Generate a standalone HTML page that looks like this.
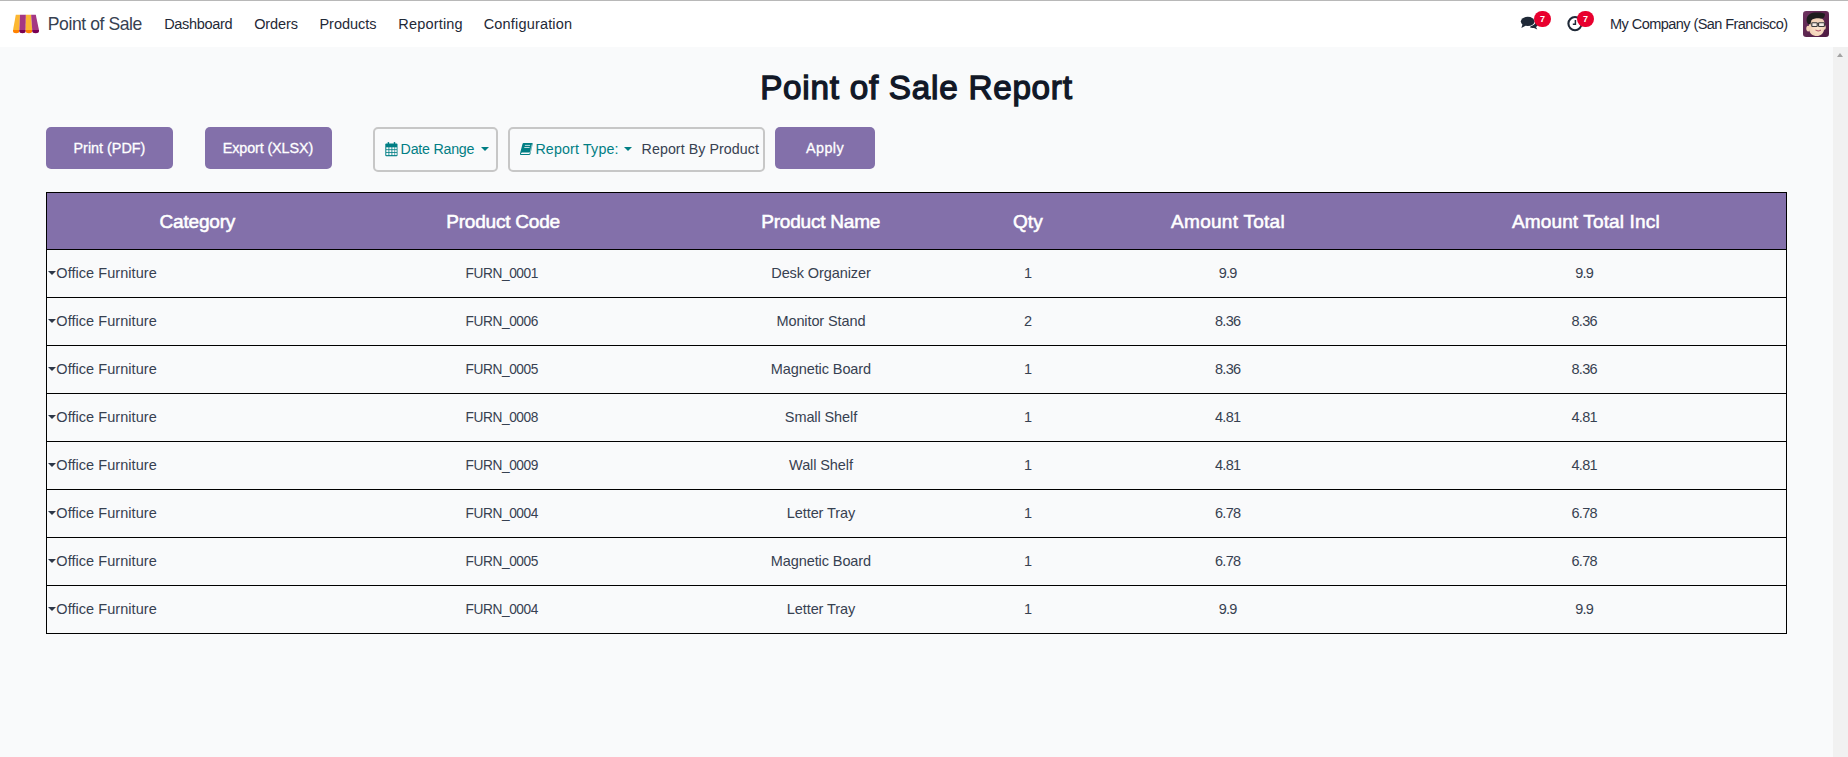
<!DOCTYPE html>
<html><head><meta charset="utf-8">
<style>
*{box-sizing:border-box;margin:0;padding:0}
html,body{width:1848px;height:757px;overflow:hidden}
body{font-family:"Liberation Sans",sans-serif;background:#f9fafb;position:relative;color:#374151}
.topline{position:absolute;left:0;top:0;width:1848px;height:1px;background:#b8b8b8}
.nav{position:absolute;left:0;top:1px;width:1848px;height:46px;background:#fff}
.t{position:absolute;white-space:nowrap;line-height:1}
.bl{display:inline-block;width:0;height:0;vertical-align:baseline}
.scroll{position:absolute;left:1833px;top:47px;width:15px;height:710px;background:#f1f1f1}
.uparr{position:absolute;left:1836.5px;top:52.8px;width:0;height:0;border-left:3.8px solid transparent;border-right:3.8px solid transparent;border-bottom:4.4px solid #a3a3a3}
.btn{position:absolute;top:127px;height:42px;background:#8370aa;border-radius:5px}
.box{position:absolute;top:127px;height:45px;border:2px solid #c7c7c7;border-radius:5px}
.tbl{position:absolute;left:46px;top:192px;width:1741px;height:442px;border:1px solid #000}
.thead{position:absolute;left:47px;top:193px;width:1739px;height:56px;background:#8370aa}
.hl{position:absolute;left:47px;width:1739px;height:1px;background:#000}
.dt{font-size:14.5px;color:#374151}
.dc{width:200px;text-align:center}
.caret{position:absolute;left:48px;width:0;height:0;border-left:4px solid transparent;border-right:4px solid transparent;border-top:4.6px solid #2d3748}
.tcaret{position:absolute;width:0;height:0;border-left:4px solid transparent;border-right:4px solid transparent;border-top:4.4px solid #017e84}
.badge{position:absolute;top:11px;width:17px;height:16px;border-radius:8px;background:#e8002e;color:#fff;font-size:9px;font-weight:bold;text-align:center;line-height:16px}
</style></head><body>
<div class="topline"></div>
<div class="nav"></div>
<svg style="position:absolute;left:12px;top:13px" width="28" height="22" viewBox="12 13 28 22">
  <path d="M15.8 14.8 H20 L19.3 30.2 H13 Z" fill="#fcb732"/>
  <path d="M20 14.8 H25.9 L25.7 30.2 H19.3 Z" fill="#a43783"/>
  <path d="M25.9 14.8 H31.1 L32.2 30.2 H25.7 Z" fill="#fcb732"/>
  <path d="M31.1 14.8 H35.8 L39 30.2 H32.2 Z" fill="#a43783"/>
  <path d="M13 30 H19.3 V31 A3.15 2.2 0 0 1 13 31 Z" fill="#ff8200"/>
  <path d="M19.3 30 H25.7 V31 A3.2 2.2 0 0 1 19.3 31 Z" fill="#7a0052"/>
  <path d="M25.7 30 H32.2 V31 A3.25 2.2 0 0 1 25.7 31 Z" fill="#ff8200"/>
  <path d="M32.2 30 H39 V31 A3.4 2.2 0 0 1 32.2 31 Z" fill="#7a0052"/>
</svg>
<!-- chat icon -->
<svg style="position:absolute;left:1520px;top:15px" width="20" height="18" viewBox="0 0 20 18">
  <path d="M10.6 11.2 C13.5 10.8 15.6 9 15.6 6.6 C15.6 5.9 15.4 5.3 15.1 4.8 C17 5.5 18.3 6.9 18.3 8.6 C18.3 10 17.4 11.2 16 12 L17.3 14.5 L14 12.9 C13.5 13 13 13.1 12.5 13.1 C11.6 13.1 10.8 12.9 10.1 12.6 Z" fill="#1f2937"/>
  <ellipse cx="7.7" cy="6.4" rx="6.9" ry="4.6" fill="#1f2937"/>
  <path d="M2.6 9 L1.4 13 L6 10.6 Z" fill="#1f2937"/>
</svg>
<div class="badge" style="left:1534px">7</div>
<!-- clock icon -->
<svg style="position:absolute;left:1566px;top:15px" width="18" height="18" viewBox="0 0 18 18">
  <circle cx="9" cy="8.6" r="6.6" fill="none" stroke="#1f2937" stroke-width="2.1"/>
  <path d="M9.4 4.9 V9.2 H6.8" fill="none" stroke="#1f2937" stroke-width="1.5"/>
</svg>
<div class="badge" style="left:1577px">7</div>
<!-- avatar -->
<svg style="position:absolute;left:1803px;top:11px" width="26" height="26" viewBox="0 0 26 26">
  <defs><linearGradient id="ag" x1="0" y1="0" x2="1" y2="1"><stop offset="0" stop-color="#6e3461"/><stop offset="1" stop-color="#4d1a40"/></linearGradient>
  <radialGradient id="sk" cx="0.55" cy="0.55" r="0.6"><stop offset="0" stop-color="#fde6cf"/><stop offset="1" stop-color="#efcdb2"/></radialGradient></defs>
  <rect x="0" y="0" width="26" height="26" rx="3.2" fill="url(#ag)"/>
  <ellipse cx="5.2" cy="17.6" rx="1.9" ry="2.8" fill="#f3d2b8"/>
  <ellipse cx="21.2" cy="16.4" rx="1.6" ry="2.4" fill="#f3d2b8"/>
  <path d="M6 10 C6 7.5 9 6.2 13.5 6.4 C18 6.6 21.2 8 21.4 11.5 L21.2 18 C20.8 22.6 17.5 25 13.8 25 C9.6 25 6.4 22.4 6 18 Z" fill="url(#sk)"/>
  <path d="M3.6 9.5 C3.4 5 6.8 2 11.5 1.6 C15 1.2 19 1.4 21.6 2.6 C22.4 3.4 21.8 5.6 20.6 7 C19.8 7.6 18.5 7.4 17 7.4 C13 7.2 10 7.8 8.4 9.2 L7.4 13.4 L5.2 13 C4.2 12 3.7 10.8 3.6 9.5 Z" fill="#1e1e1e"/>
  <rect x="8.8" y="11.7" width="5.4" height="3.8" rx="0.6" fill="#f4ece6" stroke="#3a3a3a" stroke-width="1.1"/>
  <rect x="15.6" y="11.7" width="5.8" height="3.8" rx="0.6" fill="#f4ece6" stroke="#3a3a3a" stroke-width="1.1"/>
  <path d="M14.2 12.6 H15.6" stroke="#3a3a3a" stroke-width="0.9"/>
  <path d="M12.6 19.2 Q15.2 21.4 18 19.2 Q15.3 20 12.6 19.2 Z" fill="#fff" stroke="#b05060" stroke-width="0.7"/>
</svg>
<div class="scroll"></div><div class="uparr"></div>
<div class="btn" style="left:46px;width:127px"></div>
<div class="btn" style="left:205px;width:127px"></div>
<div class="box" style="left:373px;width:125px"></div>
<div class="box" style="left:508px;width:257px"></div>
<div class="btn" style="left:775px;width:100px"></div>
<!-- calendar icon -->
<svg style="position:absolute;left:384px;top:141px" width="15" height="16" viewBox="0 0 15 16">
  <rect x="1.3" y="2.6" width="12.2" height="12.6" rx="1" fill="#017e84"/>
  <g fill="#f9fafb">
   <rect x="2.3" y="6.3" width="2.2" height="2"/><rect x="5.3" y="6.3" width="2.2" height="2"/><rect x="8.3" y="6.3" width="2.2" height="2"/><rect x="11.1" y="6.3" width="1.6" height="2"/>
   <rect x="2.3" y="9.1" width="2.2" height="2"/><rect x="5.3" y="9.1" width="2.2" height="2"/><rect x="8.3" y="9.1" width="2.2" height="2"/><rect x="11.1" y="9.1" width="1.6" height="2"/>
   <rect x="2.3" y="11.9" width="2.2" height="2.2"/><rect x="5.3" y="11.9" width="2.2" height="2.2"/><rect x="8.3" y="11.9" width="2.2" height="2.2"/><rect x="11.1" y="11.9" width="1.6" height="2.2"/>
  </g>
  <rect x="3.7" y="1" width="1.4" height="3.4" rx="0.6" fill="#017e84"/><rect x="9.8" y="1" width="1.4" height="3.4" rx="0.6" fill="#017e84"/>
</svg>
<div class="tcaret" style="left:481px;top:147px"></div>
<!-- book icon -->
<svg style="position:absolute;left:519px;top:142px" width="15" height="14" viewBox="0 0 15 14">
  <path d="M4.6 1 H13 Q13.9 1 13.7 1.9 L11.6 11.2 Q11.4 12.9 10.2 12.9 H2 Q0.7 12.9 1 11.4 L3.5 2 Q3.8 1 4.6 1 Z" fill="#017e84"/>
  <path d="M2.2 11.1 H10.6 L10.4 12 H2 Z" fill="#f9fafb"/>
  <path d="M2.6 10.6 L11.2 10.6 L13.1 2.4" fill="none" stroke="#f9fafb" stroke-width="0.55"/>
  <path d="M5.9 3.4 H11.1 M5.3 5.5 H10.6" stroke="#f9fafb" stroke-width="0.75"/>
</svg>
<div class="tcaret" style="left:624px;top:147px"></div>
<div class="tbl"></div>
<div class="thead"></div>
<div class="hl" style="top:249px"></div>
<div class="hl" style="top:297px"></div>
<div class="hl" style="top:345px"></div>
<div class="hl" style="top:393px"></div>
<div class="hl" style="top:441px"></div>
<div class="hl" style="top:489px"></div>
<div class="hl" style="top:537px"></div>
<div class="hl" style="top:585px"></div>
<div class="caret" style="top:271px"></div>
<div class="t dt" style="left:56.30px;top:265.57px;letter-spacing:0.05px">Office Furniture</div>
<div class="t dt dc" style="left:402.00px;top:265.57px;letter-spacing:-0.45px;text-indent:-0.45px;transform:scaleX(0.945)">FURN_0001</div>
<div class="t dt dc" style="left:721.00px;top:265.57px;letter-spacing:-0.1px;text-indent:-0.1px">Desk Organizer</div>
<div class="t dt dc" style="left:928.00px;top:265.57px;letter-spacing:-0.7px;text-indent:-0.7px">1</div>
<div class="t dt dc" style="left:1128.00px;top:265.57px;letter-spacing:-0.7px;text-indent:-0.7px">9.9</div>
<div class="t dt dc" style="left:1484.50px;top:265.57px;letter-spacing:-0.7px;text-indent:-0.7px">9.9</div>
<div class="caret" style="top:319px"></div>
<div class="t dt" style="left:56.30px;top:313.57px;letter-spacing:0.05px">Office Furniture</div>
<div class="t dt dc" style="left:402.00px;top:313.57px;letter-spacing:-0.45px;text-indent:-0.45px;transform:scaleX(0.945)">FURN_0006</div>
<div class="t dt dc" style="left:721.00px;top:313.57px;letter-spacing:-0.1px;text-indent:-0.1px">Monitor Stand</div>
<div class="t dt dc" style="left:928.00px;top:313.57px;letter-spacing:-0.7px;text-indent:-0.7px">2</div>
<div class="t dt dc" style="left:1128.00px;top:313.57px;letter-spacing:-0.7px;text-indent:-0.7px">8.36</div>
<div class="t dt dc" style="left:1484.50px;top:313.57px;letter-spacing:-0.7px;text-indent:-0.7px">8.36</div>
<div class="caret" style="top:367px"></div>
<div class="t dt" style="left:56.30px;top:361.57px;letter-spacing:0.05px">Office Furniture</div>
<div class="t dt dc" style="left:402.00px;top:361.57px;letter-spacing:-0.45px;text-indent:-0.45px;transform:scaleX(0.945)">FURN_0005</div>
<div class="t dt dc" style="left:721.00px;top:361.57px;letter-spacing:-0.1px;text-indent:-0.1px">Magnetic Board</div>
<div class="t dt dc" style="left:928.00px;top:361.57px;letter-spacing:-0.7px;text-indent:-0.7px">1</div>
<div class="t dt dc" style="left:1128.00px;top:361.57px;letter-spacing:-0.7px;text-indent:-0.7px">8.36</div>
<div class="t dt dc" style="left:1484.50px;top:361.57px;letter-spacing:-0.7px;text-indent:-0.7px">8.36</div>
<div class="caret" style="top:415px"></div>
<div class="t dt" style="left:56.30px;top:409.57px;letter-spacing:0.05px">Office Furniture</div>
<div class="t dt dc" style="left:402.00px;top:409.57px;letter-spacing:-0.45px;text-indent:-0.45px;transform:scaleX(0.945)">FURN_0008</div>
<div class="t dt dc" style="left:721.00px;top:409.57px;letter-spacing:-0.1px;text-indent:-0.1px">Small Shelf</div>
<div class="t dt dc" style="left:928.00px;top:409.57px;letter-spacing:-0.7px;text-indent:-0.7px">1</div>
<div class="t dt dc" style="left:1128.00px;top:409.57px;letter-spacing:-0.7px;text-indent:-0.7px">4.81</div>
<div class="t dt dc" style="left:1484.50px;top:409.57px;letter-spacing:-0.7px;text-indent:-0.7px">4.81</div>
<div class="caret" style="top:463px"></div>
<div class="t dt" style="left:56.30px;top:457.57px;letter-spacing:0.05px">Office Furniture</div>
<div class="t dt dc" style="left:402.00px;top:457.57px;letter-spacing:-0.45px;text-indent:-0.45px;transform:scaleX(0.945)">FURN_0009</div>
<div class="t dt dc" style="left:721.00px;top:457.57px;letter-spacing:-0.1px;text-indent:-0.1px">Wall Shelf</div>
<div class="t dt dc" style="left:928.00px;top:457.57px;letter-spacing:-0.7px;text-indent:-0.7px">1</div>
<div class="t dt dc" style="left:1128.00px;top:457.57px;letter-spacing:-0.7px;text-indent:-0.7px">4.81</div>
<div class="t dt dc" style="left:1484.50px;top:457.57px;letter-spacing:-0.7px;text-indent:-0.7px">4.81</div>
<div class="caret" style="top:511px"></div>
<div class="t dt" style="left:56.30px;top:505.57px;letter-spacing:0.05px">Office Furniture</div>
<div class="t dt dc" style="left:402.00px;top:505.57px;letter-spacing:-0.45px;text-indent:-0.45px;transform:scaleX(0.945)">FURN_0004</div>
<div class="t dt dc" style="left:721.00px;top:505.57px;letter-spacing:-0.1px;text-indent:-0.1px">Letter Tray</div>
<div class="t dt dc" style="left:928.00px;top:505.57px;letter-spacing:-0.7px;text-indent:-0.7px">1</div>
<div class="t dt dc" style="left:1128.00px;top:505.57px;letter-spacing:-0.7px;text-indent:-0.7px">6.78</div>
<div class="t dt dc" style="left:1484.50px;top:505.57px;letter-spacing:-0.7px;text-indent:-0.7px">6.78</div>
<div class="caret" style="top:559px"></div>
<div class="t dt" style="left:56.30px;top:553.57px;letter-spacing:0.05px">Office Furniture</div>
<div class="t dt dc" style="left:402.00px;top:553.57px;letter-spacing:-0.45px;text-indent:-0.45px;transform:scaleX(0.945)">FURN_0005</div>
<div class="t dt dc" style="left:721.00px;top:553.57px;letter-spacing:-0.1px;text-indent:-0.1px">Magnetic Board</div>
<div class="t dt dc" style="left:928.00px;top:553.57px;letter-spacing:-0.7px;text-indent:-0.7px">1</div>
<div class="t dt dc" style="left:1128.00px;top:553.57px;letter-spacing:-0.7px;text-indent:-0.7px">6.78</div>
<div class="t dt dc" style="left:1484.50px;top:553.57px;letter-spacing:-0.7px;text-indent:-0.7px">6.78</div>
<div class="caret" style="top:607px"></div>
<div class="t dt" style="left:56.30px;top:601.57px;letter-spacing:0.05px">Office Furniture</div>
<div class="t dt dc" style="left:402.00px;top:601.57px;letter-spacing:-0.45px;text-indent:-0.45px;transform:scaleX(0.945)">FURN_0004</div>
<div class="t dt dc" style="left:721.00px;top:601.57px;letter-spacing:-0.1px;text-indent:-0.1px">Letter Tray</div>
<div class="t dt dc" style="left:928.00px;top:601.57px;letter-spacing:-0.7px;text-indent:-0.7px">1</div>
<div class="t dt dc" style="left:1128.00px;top:601.57px;letter-spacing:-0.7px;text-indent:-0.7px">9.9</div>
<div class="t dt dc" style="left:1484.50px;top:601.57px;letter-spacing:-0.7px;text-indent:-0.7px">9.9</div>
<div class="t" id="brand" style="left:47.80px;top:15.91px;font-size:17.59px;letter-spacing:-0.433px;font-weight:400;color:#374151;">Point of Sale<i class="bl"></i></div>
<div class="t" id="n1" style="left:164.20px;top:16.91px;font-size:14.53px;letter-spacing:-0.325px;font-weight:400;color:#1f2937;">Dashboard<i class="bl"></i></div>
<div class="t" id="n2" style="left:254.20px;top:16.91px;font-size:14.53px;letter-spacing:-0.120px;font-weight:400;color:#1f2937;">Orders<i class="bl"></i></div>
<div class="t" id="n3" style="left:319.50px;top:16.91px;font-size:14.53px;letter-spacing:-0.057px;font-weight:400;color:#1f2937;">Products<i class="bl"></i></div>
<div class="t" id="n4" style="left:398.30px;top:16.91px;font-size:14.53px;letter-spacing:0.175px;font-weight:400;color:#1f2937;">Reporting<i class="bl"></i></div>
<div class="t" id="n5" style="left:483.70px;top:16.91px;font-size:14.53px;letter-spacing:0.167px;font-weight:400;color:#1f2937;">Configuration<i class="bl"></i></div>
<div class="t" id="comp" style="left:1610.00px;top:16.91px;font-size:14.53px;letter-spacing:-0.560px;font-weight:400;color:#1f2937;">My Company (San Francisco)<i class="bl"></i></div>
<div class="t" id="title" style="left:760.20px;top:70.91px;font-size:33.28px;letter-spacing:0.737px;font-weight:400;color:#111827;-webkit-text-stroke:1.3px #111827">Point of Sale Report<i class="bl"></i></div>
<div class="t" id="b1" style="left:73.50px;top:140.90px;font-size:14.39px;letter-spacing:0.000px;font-weight:400;color:#ffffff;-webkit-text-stroke:0.3px #ffffff">Print (PDF)<i class="bl"></i></div>
<div class="t" id="b2" style="left:222.80px;top:140.90px;font-size:14.39px;letter-spacing:-0.125px;font-weight:400;color:#ffffff;-webkit-text-stroke:0.3px #ffffff">Export (XLSX)<i class="bl"></i></div>
<div class="t" id="b3" style="left:806.00px;top:140.81px;font-size:14.39px;letter-spacing:0.425px;font-weight:400;color:#ffffff;-webkit-text-stroke:0.3px #ffffff">Apply<i class="bl"></i></div>
<div class="t" id="dr" style="left:400.60px;top:141.90px;font-size:14.24px;letter-spacing:-0.239px;font-weight:400;color:#017e84;">Date Range<i class="bl"></i></div>
<div class="t" id="rt" style="left:535.40px;top:141.90px;font-size:14.24px;letter-spacing:0.173px;font-weight:400;color:#017e84;">Report Type:<i class="bl"></i></div>
<div class="t" id="rp" style="left:641.60px;top:141.90px;font-size:14.24px;letter-spacing:0.062px;font-weight:400;color:#374151;">Report By Product<i class="bl"></i></div>
<div class="t" id="h1" style="left:159.50px;top:212.00px;font-size:19.04px;letter-spacing:-0.200px;font-weight:400;color:#ffffff;-webkit-text-stroke:0.55px #ffffff">Category<i class="bl"></i></div>
<div class="t" id="h2" style="left:446.30px;top:212.00px;font-size:19.04px;letter-spacing:-0.236px;font-weight:400;color:#ffffff;-webkit-text-stroke:0.55px #ffffff">Product Code<i class="bl"></i></div>
<div class="t" id="h3" style="left:761.20px;top:212.00px;font-size:19.04px;letter-spacing:-0.218px;font-weight:400;color:#ffffff;-webkit-text-stroke:0.55px #ffffff">Product Name<i class="bl"></i></div>
<div class="t" id="h4" style="left:1012.90px;top:212.00px;font-size:19.04px;letter-spacing:0.150px;font-weight:400;color:#ffffff;-webkit-text-stroke:0.55px #ffffff">Qty<i class="bl"></i></div>
<div class="t" id="h5" style="left:1171.10px;top:212.00px;font-size:19.04px;letter-spacing:0.255px;font-weight:400;color:#ffffff;-webkit-text-stroke:0.55px #ffffff">Amount Total<i class="bl"></i></div>
<div class="t" id="h6" style="left:1511.90px;top:212.00px;font-size:19.04px;letter-spacing:0.131px;font-weight:400;color:#ffffff;-webkit-text-stroke:0.55px #ffffff">Amount Total Incl<i class="bl"></i></div>
</body></html>
